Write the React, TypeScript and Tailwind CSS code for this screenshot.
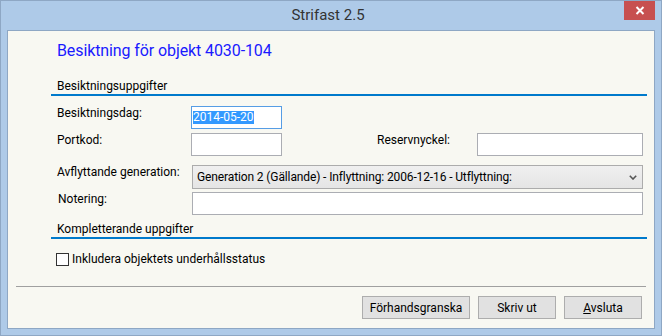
export default function App() {
  return (
    <div className="w-[662px] h-[336px] bg-[#aecae8] border border-[#8ea7c4] flex flex-col font-['Segoe_UI',Roboto,sans-serif] text-[12px] text-black overflow-hidden">
      {/* title bar */}
      <div className="h-[29px] flex items-start shrink-0">
        <div className="flex-1" />
        <div className="pt-[5px] text-[15px] leading-[19px] text-[#333333]">Strifast 2.5</div>
        <div className="flex-1 flex justify-end pr-[6px]">
          <div className="w-[31px] h-[19px] bg-[#c75050] flex items-center justify-center">
            <svg width="10" height="9" viewBox="0 0 10 9">
              <path d="M1.5 1 L8.5 8 M8.5 1 L1.5 8" stroke="white" strokeWidth="2" />
            </svg>
          </div>
        </div>
      </div>

      {/* client area */}
      <div className="mx-[6px] h-[299px] border border-[#8ea7c4] bg-[#f8f8f2] flex flex-col">
        <div className="mt-[9px] pl-[49px] h-[22px] leading-[22px] text-[16px] tracking-[-0.1px] text-[#1a1aff]">
          Besiktning för objekt 4030-104
        </div>

        <div className="mt-[16px] ml-[43px] mr-[7px] h-[18px] border-b-2 border-[#007acc] pl-[6px] leading-[16px]">
          Besiktningsuppgifter
        </div>

        {/* row 1 */}
        <div className="mt-[10px] pl-[49px] flex items-start">
          <div className="w-[134px] leading-[14px]">Besiktningsdag:</div>
          <div className="w-[91px] h-[23px] bg-white border border-[#569de5] flex items-center pl-[1px]">
            <span className="bg-[#3399ff] text-white leading-[13px]">2014-05-20</span>
          </div>
        </div>

        {/* row 2 */}
        <div className="mt-[4px] pl-[49px] flex items-start">
          <div className="w-[134px] leading-[14px]">Portkod:</div>
          <div className="w-[91px] h-[23px] bg-white border border-[#abadb3]" />
          <div className="ml-[95px] w-[100px] leading-[14px]">Reservnyckel:</div>
          <div className="w-[166px] h-[23px] bg-white border border-[#abadb3]" />
        </div>

        {/* row 3 */}
        <div className="mt-[9px] pl-[49px] flex items-start">
          <div className="w-[135px] leading-[14px]">Avflyttande generation:</div>
          <div className="w-[451px] h-[24px] border border-[#acacac] bg-gradient-to-b from-[#f0f0f0] to-[#e5e5e5] flex items-center pl-[4px] pr-[5px]">
            <span className="flex-1 leading-[14px] tracking-[-0.12px]">Generation 2 (Gällande) - Inflyttning: 2006-12-16 - Utflyttning:</span>
            <svg width="8" height="5" viewBox="0 0 8 5">
              <path d="M0.8 0.8 L4 4 L7.2 0.8" stroke="#555555" strokeWidth="1.6" fill="none" />
            </svg>
          </div>
        </div>

        {/* row 4 */}
        <div className="mt-[3px] pl-[50px] flex items-start">
          <div className="w-[134px] leading-[14px]">Notering:</div>
          <div className="w-[451px] h-[23px] bg-white border border-[#abadb3]" />
        </div>

        <div className="mt-[6px] ml-[43px] mr-[7px] h-[18px] border-b-2 border-[#007acc] pl-[6px] leading-[16px]">
          Kompletterande uppgifter
        </div>

        {/* checkbox */}
        <div className="mt-[12px] pl-[48px] h-[16px] flex items-center">
          <div className="w-[13px] h-[13px] border border-[#333333] bg-white" />
          <div className="ml-[3px] leading-[16px]">Inkludera objektets underhållsstatus</div>
        </div>

        <div className="mt-[19px] mx-[8px] h-px bg-[#a0a0a0]" />

        {/* buttons */}
        <div className="mt-[9px] pr-[12px] flex justify-end gap-[8px]">
          <div className="w-[108px] h-[23px] bg-[#e1e1e1] border border-[#adadad] flex items-center justify-center">Förhandsgranska</div>
          <div className="w-[78px] h-[23px] bg-[#e1e1e1] border border-[#adadad] flex items-center justify-center">Skriv ut</div>
          <div className="w-[78px] h-[23px] bg-[#e1e1e1] border border-[#adadad] flex items-center justify-center">
            <span><span className="underline underline-offset-1">A</span>vsluta</span>
          </div>
        </div>
      </div>
    </div>
  );
}
